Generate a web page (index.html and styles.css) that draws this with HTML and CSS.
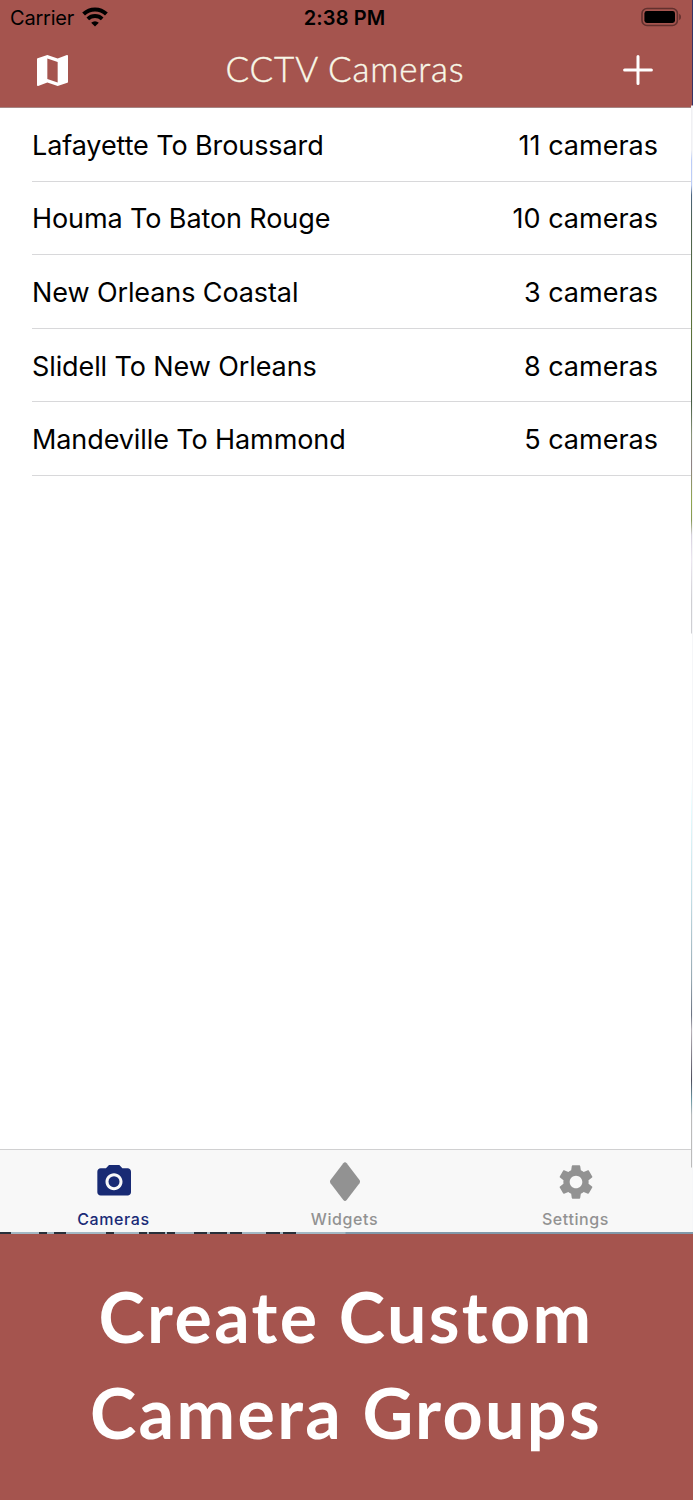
FILE: index.html
```html
<!DOCTYPE html>
<html>
<head>
	<meta charset="utf-8" />
	<title>CCTV Cameras</title>
	<link rel="stylesheet" href="styles.css">
</head>
<body>
	<div class="phone">
		<div class="screen">
			<header class="header">
				<div class="status">
					<div class="carrier">
						<span>Carrier</span>
						<svg class="wifi" width="26" height="20" viewBox="0 0 26 20">
							<path d="M1.6 7a16.4 16.4 0 0 1 22.8 0" fill="none" stroke="#000" stroke-width="4"/>
							<path d="M5.8 11.9a10.4 10.4 0 0 1 14.4 0" fill="none" stroke="#000" stroke-width="3.8"/>
							<path d="M13 19.6l-3.8-3.9a5.4 5.4 0 0 1 7.6 0z"/>
						</svg>
					</div>
					<div class="time">2:38 PM</div>
					<svg class="battery" width="40" height="20" viewBox="0 0 40 20">
						<rect x="1" y="1.5" width="35.4" height="17" rx="5" fill="none" stroke="#62302e" stroke-width="1.6"/>
						<rect x="3.4" y="4" width="30.6" height="12" rx="2.4"/>
						<path d="M38.2 6.8q1.8 1 1.8 3.2t-1.8 3.2z" fill="#62302e"/>
					</svg>
				</div>
				<div class="nav">
					<svg class="map" width="31" height="31" viewBox="3 3 18 18" fill="#fff">
						<path d="M20.5 3l-.16.03L15 5.1 9 3 3.36 4.9c-.21.07-.36.25-.36.48V20.5c0 .28.22.5.5.5l.16-.03L9 18.9l6 2.1 5.64-1.9c.21-.07.36-.25.36-.48V3.5c0-.28-.22-.5-.5-.5zM15 19l-6-2.11V5l6 2.11V19z"/>
					</svg>
					<h1 class="title">CCTV Cameras</h1>
					<svg class="add" width="30" height="30" viewBox="0 0 30 30">
						<path d="M15 1.6v26.8M1.6 15h26.8" stroke="#fff" stroke-width="3" stroke-linecap="round"/>
					</svg>
				</div>
			</header>

			<ul class="list">
				<li class="row"><span>Lafayette To Broussard</span><span class="count">11 cameras</span></li>
				<li class="row"><span>Houma To Baton Rouge</span><span class="count">10 cameras</span></li>
				<li class="row"><span>New Orleans Coastal</span><span class="count">3 cameras</span></li>
				<li class="row"><span>Slidell To New Orleans</span><span class="count">8 cameras</span></li>
				<li class="row"><span>Mandeville To Hammond</span><span class="count">5 cameras</span></li>
			</ul>

			<nav class="tabs">
				<div class="tab active">
					<svg width="40" height="40" viewBox="0 0 24 24">
						<circle cx="12" cy="11.8" r="3.3"/>
						<path d="M9 1.8L7.17 3.8H4c-1.1 0-2 .9-2 2v12.3c0 1.1.9 2 2 2h16.2c1.1 0 2-.9 2-2V5.8c0-1.1-.9-2-2-2h-3.17L15.2 1.8H9zm3 15.1c-2.8 0-5.1-2.3-5.1-5.1s2.3-5.1 5.1-5.1 5.1 2.3 5.1 5.1-2.3 5.1-5.1 5.1z"/>
					</svg>
					<span>Cameras</span>
				</div>
				<div class="tab">
					<svg width="40" height="40" viewBox="0 0 40 40">
						<path d="M18.3 1.2q1.7-2 3.4 0L34.5 18q1.1 1.6 0 3.2L21.7 38q-1.7 2-3.4 0L5.5 21.2q-1.1-1.6 0-3.2z"/>
					</svg>
					<span>Widgets</span>
				</div>
				<div class="tab">
					<svg width="40" height="40" viewBox="0.6 0.6 22.8 22.8">
						<path d="M19.14 12.94c.04-.3.06-.61.06-.94 0-.32-.02-.64-.07-.94l2.03-1.58c.18-.14.23-.41.12-.61l-1.92-3.32c-.12-.22-.37-.29-.59-.22l-2.39.96c-.5-.38-1.03-.7-1.62-.94l-.36-2.54c-.04-.24-.24-.41-.48-.41h-3.84c-.24 0-.43.17-.47.41l-.36 2.54c-.59.24-1.13.57-1.62.94l-2.39-.96c-.22-.08-.47 0-.59.22L2.74 8.87c-.12.21-.08.47.12.61l2.03 1.58c-.05.3-.09.63-.09.94s.02.64.07.94l-2.03 1.58c-.18.14-.23.41-.12.61l1.92 3.32c.12.22.37.29.59.22l2.39-.96c.5.38 1.03.7 1.62.94l.36 2.54c.05.24.24.41.48.41h3.84c.24 0 .44-.17.47-.41l.36-2.54c.59-.24 1.13-.56 1.62-.94l2.39.96c.22.08.47 0 .59-.22l1.92-3.32c.12-.22.07-.47-.12-.61l-2.01-1.58zM12 15.6c-1.98 0-3.6-1.62-3.6-3.6s1.62-3.6 3.6-3.6 3.6 1.62 3.6 3.6-1.62 3.6-3.6 3.6z"/>
					</svg>
					<span>Settings</span>
				</div>
			</nav>
		</div>
		<div class="edge"></div>
	</div>
	<div class="shore"></div>
	<div class="banner">Create Custom<br/>Camera Groups</div>
</body>
</html>
```

FILE: styles.css
```css
body {
	margin: 0;
	padding: 0;
	background: #a5544e;
	font-family: Inter, "Liberation Sans", sans-serif;
	color: #000;
}

.phone {
	display: flex;
	height: 1232px;
	background: #fff;
}

.screen {
	display: flex;
	flex-direction: column;
	width: 691px;
}

/* sliver of the photo beside the screen */
.edge {
	box-sizing: border-box;
	width: 2px;
	background:
		linear-gradient(#363467 0 105px, #f5f6f8 106px) right / 1px 100% no-repeat,
		linear-gradient(#a5544e 0 105px, #f0f0f3 106px 150px, #bccdf8 160px 185px, #4b6580 195px, #4d6151 220px, #5c7338 330px, #455b43 400px, #8a9478 435px, #8f8285 465px, #90a64d 500px, #879853 520px, #d7d1de 535px, #ece6f0 560px, #cfcfd3 600px 633px, #fff 634px 780px, #e5fcff 810px, #c2dde5 900px, #97a9b2 980px, #6b7382 1015px, #b9b3b9 1030px, #4e4e5d 1080px, #6c9aa5 1100px, #bbb 1115px 1167px, #f8f8f8 1168px);
}

.header {
	display: flex;
	flex-direction: column;
	height: 107px;
	background: #a5544e;
	border-bottom: 1px solid #a58684;
}

.status {
	display: grid;
	grid-template-columns: 1fr auto 1fr;
	align-items: center;
	height: 34px;
	padding: 0 10px;
	font-size: 20px;
}

.carrier {
	display: flex;
	align-items: center;
	gap: 8px;
	padding-top: 1px;
	letter-spacing: -0.2px;
}

.wifi {
	margin-bottom: 2px;
}

.time {
	padding: 2px 2px 0 0;
	font-weight: 600;
	letter-spacing: 0.1px;
}

.battery {
	justify-self: end;
}

.nav {
	display: flex;
	align-items: center;
	justify-content: space-between;
	height: 73px;
	padding: 0 38px 0 37px;
}

.map,
.add {
	margin-bottom: 1px;
}

.title {
	margin: 0 1px 6px 0;
	color: #f8f8e8;
	font-family: Lato, sans-serif;
	font-size: 35px;
	font-weight: 300;
	letter-spacing: 0.8px;
	-webkit-text-stroke: 0.4px #f8f8e8;
}

.list {
	flex: 1;
	margin: 0;
	padding: 0 0 0 32px;
	list-style: none;
}

.row {
	display: flex;
	align-items: center;
	justify-content: space-between;
	box-sizing: border-box;
	height: 73.6px;
	padding: 2px 33px 0 0;
	border-bottom: 1px solid #d8d8da;
	font-size: 27px;
	letter-spacing: -0.1px;
}

.count {
	letter-spacing: 0;
}

.tabs {
	display: grid;
	grid-template-columns: 227px 235px 227px;
	height: 82px;
	background: #f8f8f8;
	border-top: 1px solid #d0d0d1;
}

.tab {
	display: flex;
	flex-direction: column;
	align-items: center;
	gap: 7px;
	padding-top: 12px;
	color: #929292;
	fill: #929292;
	font-size: 16px;
	font-weight: 500;
	line-height: 20px;
	letter-spacing: 0.6px;
}

	.tab.active {
		color: #1a2b77;
		fill: #182a74;
	}

/* waterline peeking out under the tab bar */
.shore {
	height: 2px;
	background: linear-gradient(90deg, #28303a 0 11px, #a3b8c4 11px 39px, #28303a 39px 47px, #a3b8c4 47px 54px, #28303a 54px 66px, #a3b8c4 66px 106px, #28303a 106px 114px, #a3b8c4 114px 139px, #28303a 139px 147px, #a3b8c4 147px 149px, #28303a 149px 165px, #a3b8c4 165px 167px, #28303a 167px 175px, #a3b8c4 175px 194px, #28303a 194px 207px, #a3b8c4 207px 210px, #28303a 210px 227px, #a3b8c4 227px 230px, #28303a 230px 242px, #a3b8c4 242px 266px, #28303a 266px 280px, #a3b8c4 280px 283px, #28303a 283px 296px, #a3b8c4 296px 345px, #8199aa 346px);
}

.banner {
	padding: 34px 1px 0 0;
	color: #fff;
	font-family: Lato, sans-serif;
	font-size: 70px;
	font-weight: 700;
	line-height: 96px;
	letter-spacing: 2.35px;
	text-align: center;
}
```
